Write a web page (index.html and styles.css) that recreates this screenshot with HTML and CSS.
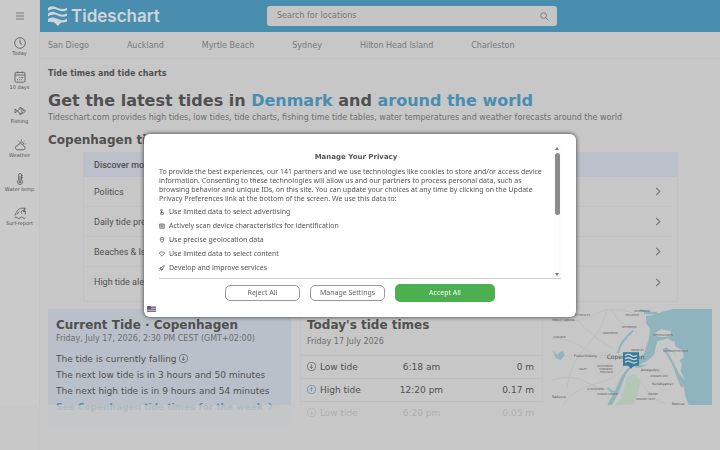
FILE: index.html
```html
<!DOCTYPE html>
<html lang="en">
<head>
<meta charset="utf-8">
<meta name="viewport" content="width=device-width, initial-scale=1">
<title>Tideschart</title>
<link rel="stylesheet" href="styles.css">
</head>
<body>
<svg width="0" height="0" class="defs" aria-hidden="true">
  <symbol id="waves" viewBox="0 0 58 61">
    <path d="M0 6Q9-4 28 5T58 5V13Q46 19 30 12T0 15zM0 23Q10 13 28 22T58 22V30Q46 36 30 29T0 32zM0 40Q10 30 28 39T58 39V48Q50 51 40 50L30 61L20 50Q8 46 0 49z"/>
  </symbol>
  <symbol id="chevron" viewBox="0 0 6 10"><path d="M1 1l4 4-4 4" fill="none" stroke="currentColor" stroke-width="1.3"/></symbol>
  <symbol id="down" viewBox="0 0 10 10"><g fill="none" stroke="currentColor" stroke-width=".7"><circle cx="5" cy="5" r="4.500"/><path d="M5 2.700v4.400M3.300 5.400L5 7.200l1.700-1.800"/></g></symbol>
  <symbol id="up" viewBox="0 0 10 10"><g fill="none" stroke="currentColor" stroke-width=".7"><circle cx="5" cy="5" r="4.500"/><path d="M5 7.300V2.900M3.300 4.600L5 2.800l1.700 1.800"/></g></symbol>
</svg>

<aside class="sidebar">
  <button class="burger" aria-label="Menu"><svg viewBox="0 0 8 8"><path d="M0 1h8M0 4h8M0 7h8" stroke="currentColor" stroke-width="1"/></svg></button>
  <a href="#"><svg viewBox="0 0 12 12"><circle cx="6" cy="6" r="5.3"/><path d="M6 2.6V6l2.3 1.5"/></svg>Today</a>
  <a href="#"><svg viewBox="0 0 12 12"><rect x="1" y="1.4" width="10" height="9.8" rx="1.2"/><path d="M1 4h10M3.7.6v1.6M8.3.6v1.6M3 8.7h1M5 8.7h1M5.3 6.6h1M7.3 6.6h2M7 8.7h1"/></svg>10 days</a>
  <a href="#"><svg viewBox="0 0 12 12"><path d="M3.6 6C5 3.2 9.5 2.600 11.500 6C9.500 9.400 5 8.800 3.600 6L1 4v4zM5 3.800L6 2.200l2 1.300M5 8.200l1 1.600 2-1.300M8.300 3.900q-1 2.100 0 4.200"/><circle cx="9.600" cy="5.500" r=".3"/></svg>Fishing</a>
  <a href="#"><svg viewBox="0 0 12 12"><path d="M3 10.800h6a2 2 0 0 0 .2-4A2.900 2.900 0 0 0 3.700 6.500 2.200 2.200 0 0 0 3 10.800zM5.300 4.300a2.300 2.300 0 0 1 4.400 1.200M7.500.5v1.200M4.300 1.700l.7.900M10.900 1.800l-.8.800M11.800 4.900h-.9"/></svg>Weather</a>
  <a href="#"><svg viewBox="0 0 12 12"><path d="M4.500 7V2a1.500 1.500 0 0 1 3 0v5a2.500 2.500 0 1 1-3 0zM6 3v5.500M7.500 2.500h1.300M7.500 4.500h1.300"/><circle cx="6" cy="9" r=".9"/></svg>Water temp</a>
  <a href="#"><svg viewBox="0 0 12 12"><path d="M1 8.500C2.500 4 4.500 1.300 7.500 1.200h3.300L10 3.300c-2.500-.2-3.400 1.600-2.300 3.300M10.800 1.200V5M9 4.500h2.200v3M.5 10.800q1.400-1.500 2.800 0t2.800 0 2.800 0 2.600 0M3 7.500l2-3"/></svg>Surf-report</a>
</aside>

<div class="page">
  <header class="topbar">
    <a class="brand" href="#"><svg><use href="#waves"/></svg><span>Tideschart</span></a>
    <form class="search">
      <input type="search" aria-label="Search for locations" placeholder="Search for locations">
      <button type="button" aria-label="Search"><svg viewBox="0 0 10 10"><circle cx="4" cy="4" r="3.200"/><path d="M6.400 6.400L9.500 9.300"/></svg></button>
    </form>
  </header>
  <nav class="places">
    <a href="#">San Diego</a><a href="#">Auckland</a><a href="#">Myrtle Beach</a><a href="#">Sydney</a><a href="#">Hilton Head Island</a><a href="#">Charleston</a>
  </nav>
  <main>
    <p class="crumb">Tide times and tide charts</p>
    <h1>Get the latest tides in <a href="#">Denmark</a> and <a href="#">around the world</a></h1>
    <p class="lead">Tideschart.com provides high tides, low tides, tide charts, fishing time tide tables, water temperatures and weather forecasts around the world</p>
    <h2>Copenhagen tide times</h2>
    <section class="discover">
      <h3>Discover more</h3>
      <a href="#">Politics<svg><use href="#chevron"/></svg></a>
      <a href="#">Daily tide predictions<svg><use href="#chevron"/></svg></a>
      <a href="#">Beaches &amp; Islands<svg><use href="#chevron"/></svg></a>
      <a href="#">High tide alerts<svg><use href="#chevron"/></svg></a>
    </section>
    <div class="cards">
      <section class="current">
        <h2>Current Tide · Copenhagen</h2>
        <p class="date">Friday, July 17, 2026, 2:30 PM CEST (GMT+02:00)</p>
        <p>The tide is currently falling <svg class="dir"><use href="#down"/></svg></p>
        <p>The next low tide is in 3 hours and 50 minutes</p>
        <p>The next high tide is in 9 hours and 54 minutes</p>
        <a class="more" href="#">See Copenhagen tide times for the week <svg><use href="#chevron"/></svg></a>
      </section>
      <section class="today">
        <h2>Today's tide times</h2>
        <p class="date">Friday 17 July 2026</p>
        <table>
          <tr><th scope="row"><svg class="dir"><use href="#down"/></svg>Low tide</th><td>6:18 am</td><td>0 m</td></tr>
          <tr><th scope="row"><svg class="dir rising"><use href="#up"/></svg>High tide</th><td>12:20 pm</td><td>0.17 m</td></tr>
          <tr><th scope="row"><svg class="dir"><use href="#down"/></svg>Low tide</th><td>6:20 pm</td><td>0.05 m</td></tr>
        </table>
      </section>
      <svg class="map" viewBox="36 27 480 303" preserveAspectRatio="xMidYMin slice" role="img" aria-label="Map of Copenhagen">
        <path class="land" d="M36 27h480v303H36z"/>
        <path class="road" d="M36 62q80 10 130-20t120 0M36 115q60 0 110 40t90 0M60 330q30-60 110-80t80-60M90 27q30 60 130 120M36 240q60-20 110 10t90 10M200 27q-10 60-60 110t-60 130M250 230q40 0 70 40t60 40M36 175q80-15 170-8t40 20M215 27q20 50 70 60M300 215q40-10 80 10"/>
        <path class="sea" d="M400 27H516V315H446L436 288L432 262L413 232L405 200L384 158L365 146L375 138L402 158L416 184L431 172L428 150L407 140L402 122L384 130L362 120L350 125L353 158L338 188L300 203L276 200L258 222L234 282L216 314L202 315L226 270L246 225L270 198L312 162L326 120L330 88L318 68L318 48L345 44L365 36z"/>
        <path class="land" d="M346 98l18-10 28 4v16l-24 4-20-4zM356 125l26-10 20 12-10 10-30 12zM374 152l22 0 30 40-4 20 14 30-16-18-22-40zM350 130l-8 34-22 20-26 12 40-4 22-22z"/>
        <path class="water-line" d="M279 92q-40 35-45 67M375 152q22 30 35 69t18 40M338 110q10 40-8 62M300 30l60 16M312 40l40-2M202 263q15 18 24 10"/>
        <path class="sea" d="M38 152l14 12 8-8 10-2 4 12-12 15-15-7z"/>
        <path class="park" d="M261 232l24-9 16 18-7 38-13 33-56 5 18-24z"/>
        <g class="labels">
          <text x="102" y="170">Frederiksberg</text><text x="303" y="213">Amagerbro</text><text x="336" y="256">Sundbyøster</text><text x="395" y="314">Kastrup</text><text x="36" y="293">Rødovre</text>
        </g>
        <g class="labels minor">
          <text x="33" y="62">EMDRUP SØBORG</text><text x="283" y="36">NORDHAVN</text><text x="105" y="47">UTTERSLEV</text><text x="256" y="48">HELLERUP</text><text x="188" y="103">NØRREBRO</text><text x="246" y="83">ØSTERBRO</text><text x="340" y="109">REFSHALEØEN</text><text x="40" y="115">VANLØSE</text><text x="274" y="152">INDRE BY</text><text x="370" y="156">MARGRETHEHOLM</text><text x="170" y="202">VESTERBRO</text><text x="178" y="211">KONGENS</text><text x="180" y="220">ENGHAVE</text><text x="116" y="211">VALBY</text><text x="142" y="270">SYDHAVNEN</text><text x="172" y="286">KONGELUNDEN</text><text x="331" y="230">AMAGER ØST</text><text x="288" y="299">AMAGER VEST</text><text x="323" y="285">TÅRNBY</text>
        </g>
        <text class="city" x="200" y="177">Copenhagen</text>
        <path class="pin" d="M249 157h48v40h-15l-9 9-9-9h-15z"/>
        <path class="pin-waves" d="M255 167q9-7 18-1t18 0M255 177q9-7 18-1t18 0M255 187q9-7 18-1t18 0"/>
      </svg>
    </div>
  </main>
</div>
<div class="fade"></div>

<div class="privacy" role="dialog" aria-labelledby="privacy-title">
  <div class="scroller">
    <div class="copy">
      <h2 id="privacy-title">Manage Your Privacy</h2>
      <p>To provide the best experiences, our 141 partners and we use technologies like cookies to store and/or access device information. Consenting to these technologies will allow us and our partners to process personal data, such as browsing behavior and unique IDs, on this site. You can update your choices at any time by clicking on the Update Privacy Preferences link at the bottom of the screen. We use this data to:</p>
      <ul>
        <li><svg viewBox="0 0 6 6"><circle cx="2.500" cy="1.200" r=".9"/><path d="M2.500 2v2M1.200 3.300h3M1.400 5.300h3V3.800L2.500 3z"/></svg>Use limited data to select advertising</li>
        <li><svg viewBox="0 0 6 6"><path d="M.7 1h4.500v4.300H.7zM.7 2h4.500M2 3.200h2v1.500M2 3.200v1.500"/></svg>Actively scan device characteristics for identification</li>
        <li><svg viewBox="0 0 6 6"><path d="M3 5.700Q1 3.400 1.200 2a1.800 1.800 0 0 1 3.600 0Q5 3.400 3 5.700z"/><circle cx="3" cy="2.200" r=".5"/></svg>Use precise geolocation data</li>
        <li><svg viewBox="0 0 6 6"><path d="M3 5.200L.8 3A1.300 1.300 0 0 1 3 1.400 1.300 1.300 0 0 1 5.200 3z"/></svg>Use limited data to select content</li>
        <li><svg viewBox="0 0 6 6"><path d="M1.500 3.500Q3 .8 5.400.6 5.200 3 2.500 4.500zM1.500 3.500L.6 3.300 2 2M2.500 4.500l.2 1L4 4M.5 5.500l1-1"/></svg>Develop and improve services</li>
      </ul>
    </div>
    <div class="bar" aria-hidden="true"><svg viewBox="0 0 4 3"><path d="M0 3l2-3 2 3z"/></svg><span></span><svg viewBox="0 0 4 3"><path d="M0 0l2 3 2-3z"/></svg></div>
  </div>
  <div class="actions">
    <button>Reject All</button><button>Manage Settings</button><button class="accept">Accept All</button>
  </div>
  <button class="language" aria-label="Language"><svg viewBox="0 0 9 6"><path fill="#c7a9b5" d="M0 0h9v6H0z"/><path d="M0 1.500h9M0 3.500h9M0 5.500h9" stroke="#777385"/><path fill="#5d5f7d" d="M0 0h4v3H0z"/></svg></button>
</div>
</body>
</html>
```

FILE: styles.css
```css
* { box-sizing: border-box; }
body {
  margin: 0;
  min-height: 100vh;
  display: flex;
  overflow: hidden;
  background: #c7c7c7;
  color: #505050;
  font: 9px/16px "DejaVu Sans", sans-serif;
}
h1, h2, h3, p, ul { margin: 0; padding: 0; }
a { color: inherit; text-decoration: none; }
button { padding: 0; border: 0; background: none; color: inherit; font: inherit; }
svg { flex: none; fill: none; }
.defs { position: absolute; }

.sidebar {
  width: 40px;
  flex: none;
  display: flex;
  flex-direction: column;
  background: #cacaca;
  border-right: 1px solid #c3c3c3;
}
.burger { height: 32px; display: grid; place-items: center; color: #777; }
.burger svg { width: 8px; height: 8px; }
.sidebar a {
  height: 34px;
  padding-top: 5px;
  display: flex;
  flex-direction: column;
  align-items: center;
  font-size: 5px;
  line-height: 9px;
  white-space: nowrap;
}
.sidebar a svg { width: 12px; height: 12px; stroke: #555; stroke-width: .8; }

.page { flex: 1; min-width: 0; }
.topbar {
  height: 32px;
  padding: 0 8px;
  display: flex;
  align-items: center;
  background: #4a8eaf;
}
.brand {
  flex: 0 0 219px;
  display: flex;
  align-items: center;
  gap: 4px;
  color: #d0d5d8;
  font: 600 17px/24px Inter, sans-serif;
}
.brand svg { width: 19px; height: 20px; fill: #d0d5d8; }
.search {
  flex: 0 1 290px;
  height: 20px;
  padding: 0 8px 0 10px;
  display: flex;
  align-items: center;
  border-radius: 3px;
  background: #c5c5c5;
}
.search input {
  flex: 1;
  min-width: 0;
  padding: 0;
  border: 0;
  outline: 0;
  background: none;
  font: 8px/16px "DejaVu Sans", sans-serif;
}
.search input::placeholder { color: #777; opacity: 1; }
.search button { height: 9px; display: flex; }
.search svg { width: 9px; height: 9px; stroke: #77797c; }
.places {
  height: 27px;
  padding: 2px 8px 0;
  display: flex;
  align-items: center;
  gap: 38px;
  border-bottom: 1px solid #c0c0c0;
  color: #77777b;
  font-size: 8px;
  white-space: nowrap;
}

main { padding: 7px 8px 0; }
.crumb { font-size: 8px; font-weight: bold; }
h1 { padding-top: 9px; font-size: 16px; line-height: 20px; white-space: nowrap; }
h1 a { color: #4a8eaf; }
.lead { color: #6d6d6d; font-size: 8px; line-height: 14px; white-space: nowrap; }
main h2 { font-size: 12px; line-height: 16px; }
main > h2 { margin-top: 7px; }
.discover {
  margin: 4px 34px 0 35px;
  padding-bottom: 4px;
  border: 1px solid #c0c1c3;
  font: 9px/16px Roboto, sans-serif;
}
.discover h3 {
  height: 24px;
  padding: 4px 10px;
  background: #bbc0ca;
  font-size: 9px;
  font-weight: 500;
}
.discover a {
  height: 30px;
  margin-right: 4px;
  padding: 0 12px 0 10px;
  display: flex;
  align-items: center;
  justify-content: space-between;
  border-bottom: 1px solid #c2c2c2;
}
.discover a:last-child { border: 0; }
.discover a svg { width: 6px; height: 9px; color: #777; }

.cards {
  margin-top: 7px;
  display: grid;
  grid-template-columns: 243fr 243fr 160fr;
  gap: 9px;
}
.current { padding: 8px; background: #b9c0ca; }
.date { color: #6d6d6d; font-size: 8px; line-height: 11px; }
.current p { white-space: nowrap; }
.current .date { margin-bottom: 7px; }
.dir { width: 9px; height: 9px; vertical-align: -1px; }
.more { display: block; color: #4a8eaf; font-weight: bold; white-space: nowrap; }
.more svg { width: 5px; height: 8px; margin-left: 2px; }
.today { padding-top: 8px; border: 1px solid #c2c2c2; border-top: 0; }
.today h2, .today .date { padding: 0 6px; }
.today .date { padding-top: 3px; margin-bottom: 8px; }
.today table { width: 100%; border-collapse: collapse; table-layout: fixed; }
.today tr { height: 23px; border-top: 1px solid #bebebe; }
.today th { width: 35%; padding: 0 0 0 6px; font-weight: normal; text-align: left; }
.today td { width: 30%; padding: 0; text-align: center; }
.today td:last-child { width: 35%; padding-right: 8px; text-align: right; }
.today .dir { margin-right: 4px; }
.rising { color: #4a80a8; }

.map { width: 100%; height: 101px; }
.land { fill: #c7c7c7; }
.road { stroke: #bababa; stroke-width: 2; }
.sea { fill: #90b4be; }
.water-line { stroke: #90b4be; stroke-width: 6; }
.park { fill: #b4c6b6; }
.labels { fill: #555; font: 10px "DejaVu Sans", sans-serif; }
.minor { fill: #606060; font-size: 8px; }
.city { fill: #555; font: 18px "DejaVu Sans", sans-serif; }
.pin { fill: #377b9b; }
.pin-waves { stroke: #c5d3da; stroke-width: 4; }
.fade {
  position: fixed;
  inset: auto 0 0;
  height: 45px;
  background: rgb(199 199 199 / 80%);
}

.privacy {
  position: fixed;
  inset: 0;
  width: 60%;
  height: fit-content;
  margin: auto;
  padding: 12px 15px 5px;
  border-radius: 6px;
  background: #fff;
  box-shadow: 0 0 4px #333;
  color: #555;
  font: 7px/9px "Noto Sans", sans-serif;
}
.scroller { height: 133px; display: flex; border-bottom: 1px solid #d0d0d0; }
.copy { flex: 1; overflow: hidden; }
.copy h2 { margin: 7px 0 5px; font: bold 7px/9px "DejaVu Sans", sans-serif; text-align: center; }
.copy ul { padding-top: 2px; list-style: none; }
.copy li { height: 14px; display: flex; align-items: center; gap: 4px; }
.copy li svg { width: 6px; height: 6px; stroke: #555; stroke-width: .7; }
.bar {
  width: 8px;
  flex: none;
  padding: 1px 0 2px;
  display: flex;
  flex-direction: column;
  align-items: center;
  background: #fcfcfc;
}
.bar svg { width: 4px; height: 3px; fill: #777; }
.bar span { width: 5px; height: 62px; margin: 3px 0 auto; border-radius: 3px; background: #8b8b8b; }
.actions {
  padding-top: 5px;
  display: flex;
  align-items: center;
  justify-content: center;
  gap: 10px;
}
.actions button {
  width: 75px;
  height: 16px;
  border: 1px solid #999;
  border-radius: 5px;
  color: #666;
}
.actions .accept { width: 100px; height: 18px; border: 0; background: #4caf50; color: #fff; }
.language { display: block; margin: 4px 0 0 -12px; height: 6px; }
.language svg { display: block; width: 9px; height: 6px; }
```
